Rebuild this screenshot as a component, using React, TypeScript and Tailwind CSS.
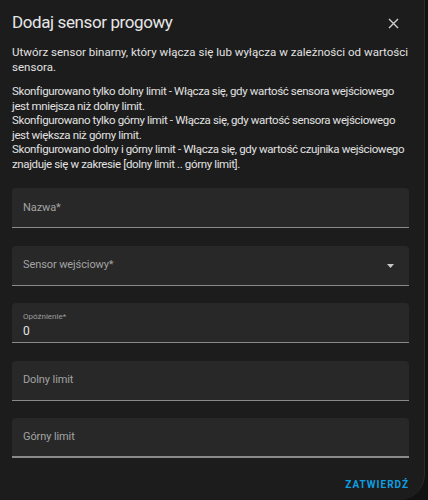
import { FC } from "react";

const Field: FC<{ label: string; value?: string; select?: boolean; thick?: boolean }> = ({
  label,
  value,
  select,
  thick,
}) => {
  if (value !== undefined) {
    return (
      <div
        className={`relative h-[40px] rounded-t-[4px] bg-[#282828] px-[11px] ${
          thick ? "border-b-2" : "border-b"
        } border-[#8a8a8a]`}
      >
        <div className="pt-[9px] text-[8px] leading-[10px] text-[#9e9e9e]">{label}</div>
        <div className="mt-[2px] text-[12px] leading-[14px] text-[#e6e6e6]">{value}</div>
      </div>
    );
  }
  return (
    <div
      className={`flex h-[40px] items-center justify-between rounded-t-[4px] bg-[#282828] pl-[11px] pr-[15px] ${
        thick ? "border-b-2" : "border-b"
      } border-[#8a8a8a]`}
    >
      <span className="text-[11px] leading-[14px] tracking-[-0.1px] text-[#a3a3a3]">{label}</span>
      {select && (
        <svg width="7" height="4" viewBox="0 0 7 4" className="mt-[1px]">
          <path d="M0 0 L7 0 L3.5 4 Z" fill="#c8c8c8" />
        </svg>
      )}
    </div>
  );
};

export default function App() {
  return (
    <div className="h-[500px] w-[428px] overflow-hidden bg-[#121212] font-['Roboto',sans-serif]">
      <div className="flex h-[500px] w-[425px] flex-col rounded-br-[26px] border-r border-[#2c2c2c] bg-[#1c1c1c]">
        <div className="flex items-start justify-between pl-[12px] pr-[25px] pt-[10px]">
          <h2 className="text-[17px] leading-[24px] tracking-[-0.4px] text-[#e6e6e6]">Dodaj sensor progowy</h2>
          <svg width="11" height="11" viewBox="0 0 11 11" className="mt-[8px]">
            <path d="M1 1 L10 10 M10 1 L1 10" stroke="#cfcfcf" strokeWidth="1.4" />
          </svg>
        </div>

        <div className="px-[12px] pt-[11px] text-[11.5px] text-[#e1e1e1]">
          <p className="leading-[15px] tracking-[0.02px]">
            <span className="block whitespace-nowrap">
              Utwórz sensor binarny, który włącza się lub wyłącza w zależności od wartości
            </span>
            <span className="block">sensora.</span>
          </p>
          <p className="mt-[9px] leading-[14.5px] tracking-[-0.37px]">
            <span className="block whitespace-nowrap">
              Skonfigurowano tylko dolny limit - Włącza się, gdy wartość sensora wejściowego
            </span>
            <span className="block">jest mniejsza niż dolny limit.</span>
            <span className="block whitespace-nowrap">
              Skonfigurowano tylko górny limit - Włącza się, gdy wartość sensora wejściowego
            </span>
            <span className="block">jest większa niż górny limit.</span>
            <span className="block whitespace-nowrap">
              Skonfigurowano dolny i górny limit - Włącza się, gdy wartość czujnika wejściowego
            </span>
            <span className="block">znajduje się w zakresie [dolny limit .. górny limit].</span>
          </p>
        </div>

        <div className="mt-[17px] flex flex-col gap-[17.5px] pl-[12px] pr-[15px]">
          <Field label="Nazwa*" />
          <Field label="Sensor wejściowy*" select />
          <Field label="Opóźnienie*" value="0" />
          <Field label="Dolny limit" />
          <Field label="Górny limit" thick />
        </div>

        <div className="flex justify-end pr-[15px] pt-[19px]">
          <button className="text-[10px] font-bold tracking-[1px] text-[#0e9ee0]">ZATWIERDŹ</button>
        </div>
      </div>
    </div>
  );
}
